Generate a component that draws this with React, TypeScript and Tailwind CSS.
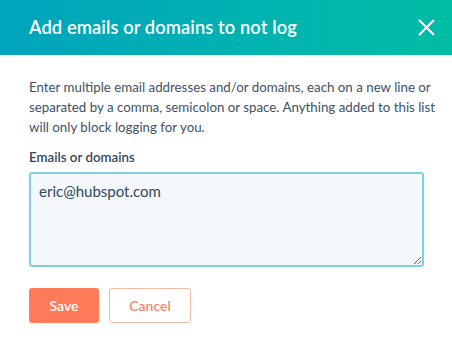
import React from "react";

const App = () => {
  return (
    <div className="w-[452px] h-[342px] bg-white overflow-hidden font-['Lato','Noto_Sans',sans-serif] text-[#33475b]">
      {/* HEADER */}
      <div className="h-[55px] bg-gradient-to-r from-[#00a4bd] to-[#00bda5] flex items-center justify-between pl-[29px] pr-[14px]">
        <h1 className="text-[18.3px] font-semibold text-white tracking-[0.1px]">
          Add emails or domains to not log
        </h1>
        <button className="w-[24px] h-[24px] flex items-center justify-center text-white">
          <svg width="17" height="17" viewBox="0 0 17 17" fill="none" stroke="currentColor" strokeWidth="2" strokeLinecap="round">
            <path d="M1.5 1.5L15.5 15.5M15.5 1.5L1.5 15.5" />
          </svg>
        </button>
      </div>

      {/* BODY */}
      <div className="pl-[29px] pt-[22px]">
        <p className="w-[408px] text-[13.3px] leading-[20px] text-[#3d5266]">
          Enter multiple email addresses and/or domains, each on a new line or separated by a comma, semicolon or space. Anything added to this list will only block logging for you.
        </p>

        <label className="block mt-[10px] text-[13.3px] font-semibold leading-[20px]">
          Emails or domains
        </label>

        <textarea
          defaultValue="eric@hubspot.com"
          className="block mt-[5px] w-[395px] h-[95px] rounded-[3px] border-2 border-[#7fd1de] bg-[#f5f8fa] px-[8px] pt-[6px] pb-[6px] text-[15px] leading-[22px] text-[#33475b] outline-none resize-y"
        />

        {/* ACTIONS */}
        <div className="flex gap-[10px] mt-[21px]">
          <button className="w-[70px] h-[35px] rounded-[3px] bg-[#ff7a59] text-white text-[14px] font-semibold">
            Save
          </button>
          <button className="w-[82px] h-[35px] rounded-[3px] border border-[#f5b8a4] bg-white text-[#f4896a] text-[14px] font-semibold">
            Cancel
          </button>
        </div>
      </div>
    </div>
  );
};

export default App;
